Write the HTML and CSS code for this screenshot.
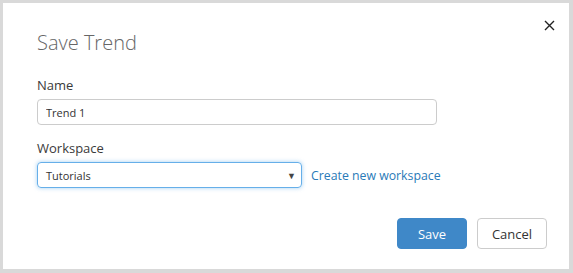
FILE: index.html
```html
<!DOCTYPE html>
<html lang="en">
<head>
    <meta charset="UTF-8">
    <meta name="viewport" content="width=device-width, initial-scale=1.0">
    <title>Save Trend</title>
    <link rel="stylesheet" href="styles.css">
</head>
<body>
    <div class="dialog">
        <div class="dialog-header">
            <h1>Save Trend</h1>
            <button class="close" aria-label="Close">
                <svg width="11" height="11" viewBox="0 0 11 11">
                    <path d="M1 1 L10 10 M10 1 L1 10" stroke="#222" stroke-width="1.4" fill="none"/>
                </svg>
            </button>
        </div>

        <div class="field">
            <label for="name">Name</label>
            <input type="text" id="name" class="name-input" value="Trend 1">
        </div>

        <div class="field">
            <label for="workspace">Workspace</label>
            <div class="workspace-row">
                <div class="select-box">
                    <span>Tutorials</span>
                    <span class="arrow">&#9660;</span>
                </div>
                <a href="#" class="create-link">Create new workspace</a>
            </div>
        </div>

        <div class="actions">
            <button class="btn btn-primary">Save</button>
            <button class="btn btn-default">Cancel</button>
        </div>
    </div>
</body>
</html>
```

FILE: styles.css
```css
html, body {
    height: 100%;
}
body {
    margin: 0;
    padding: 3px 4px 4px 3px;
    box-sizing: border-box;
    background: #d9d9d9;
    font-family: 'Open Sans', 'Noto Sans', sans-serif;
    color: #333;
}
.dialog {
    background: white;
    height: 100%;
    box-sizing: border-box;
    padding: 0 22px 0 34px;
    display: flex;
    flex-direction: column;
}
.dialog-header {
    display: flex;
    justify-content: space-between;
    align-items: flex-start;
    padding-top: 26px;
}
h1 {
    margin: 0;
    font-size: 20px;
    font-weight: 300;
    line-height: 28px;
    color: #666;
}
.close {
    background: none;
    border: none;
    padding: 0;
    margin-top: -10px;
    margin-right: -8px;
    cursor: pointer;
}
.field {
    margin-top: 19px;
}
.field + .field {
    margin-top: 14px;
}
label {
    display: block;
    font-size: 13px;
    line-height: 18px;
    margin-bottom: 5px;
    color: #3a3a3a;
}
.name-input {
    width: 400px;
    height: 26px;
    box-sizing: border-box;
    border: 1px solid #ccc;
    border-radius: 4px;
    padding: 0 8px;
    font-family: inherit;
    font-size: 11px;
    color: #333;
    display: block;
}
.workspace-row {
    display: flex;
    align-items: center;
    gap: 9px;
}
.select-box {
    width: 265px;
    height: 26px;
    box-sizing: border-box;
    border: 1px solid #66afe9;
    border-radius: 4px;
    box-shadow: 0 0 4px rgba(102, 175, 233, 0.6);
    padding: 0 5px 0 8px;
    display: flex;
    align-items: center;
    justify-content: space-between;
    font-size: 11px;
}
.arrow {
    font-size: 9px;
    color: #444;
}
.create-link {
    color: #2a7ab8;
    text-decoration: none;
    font-size: 12.3px;
}
.actions {
    margin-top: auto;
    margin-bottom: 20px;
    display: flex;
    justify-content: flex-end;
    gap: 10px;
}
.btn {
    height: 31px;
    width: 70px;
    border-radius: 4px;
    font-family: inherit;
    font-size: 13px;
    cursor: pointer;
}
.btn-primary {
    background: #3f88c8;
    border: 1px solid #3f88c8;
    color: white;
}
.btn-default {
    background: white;
    border: 1px solid #ccc;
    color: #333;
}
```
